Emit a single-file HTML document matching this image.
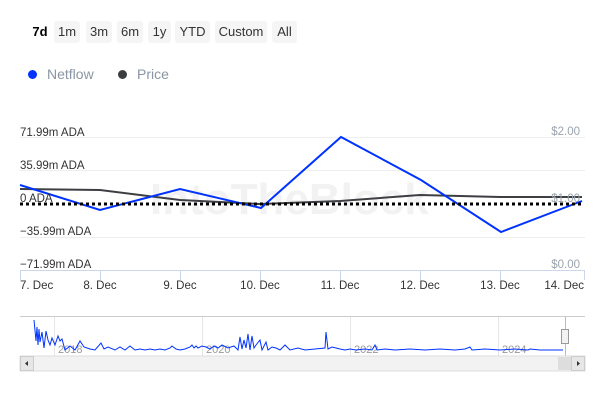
<!DOCTYPE html>
<html><head><style>
body{margin:0;width:600px;height:400px;background:#fff;font-family:"Liberation Sans",sans-serif;position:relative;overflow:hidden}
.b{position:absolute;top:21px;height:22px;line-height:22px;font-size:13px;color:#333;background:#f5f5f5;border-radius:3px;text-align:center}
.t{position:absolute;font-size:11.5px;color:#333}
</style></head><body>
<div class="b" style="left:28px;width:24px;background:none;font-weight:bold;color:#000">7d</div>
<div class="b" style="left:54px;width:26px">1m</div>
<div class="b" style="left:86px;width:26px">3m</div>
<div class="b" style="left:117px;width:26px">6m</div>
<div class="b" style="left:148px;width:23px">1y</div>
<div class="b" style="left:175px;width:35px">YTD</div>
<div class="b" style="left:215px;width:52px">Custom</div>
<div class="b" style="left:272px;width:25px">All</div>
<div style="position:absolute;left:28px;top:70px;width:9px;height:9px;border-radius:50%;background:#0033ff"></div>
<div style="position:absolute;left:47px;top:66px;font-size:14px;color:#8a96a3">Netflow</div>
<div style="position:absolute;left:118px;top:70px;width:9px;height:9px;border-radius:50%;background:#3a3d40"></div>
<div style="position:absolute;left:137px;top:66px;font-size:14px;color:#8a96a3">Price</div>
<svg width="600" height="400" style="position:absolute;left:0;top:0">
<g stroke="#eee" stroke-width="1"><line x1="20" x2="585" y1="137.5" y2="137.5"/><line x1="20" x2="585" y1="170.5" y2="170.5"/><line x1="20" x2="585" y1="237.5" y2="237.5"/></g>
<text x="150" y="214" font-size="44" font-weight="bold" fill="#f2f2f2" font-family="Liberation Sans">IntoTheBlock</text>
<line x1="20" x2="585" y1="270.5" y2="270.5" stroke="#ccd6eb"/>
<g stroke="#ccd6eb"><line x1="20.5" x2="20.5" y1="270" y2="280"/><line x1="100.5" x2="100.5" y1="270" y2="280"/><line x1="180.5" x2="180.5" y1="270" y2="280"/><line x1="260.5" x2="260.5" y1="270" y2="280"/><line x1="340.5" x2="340.5" y1="270" y2="280"/><line x1="420.5" x2="420.5" y1="270" y2="280"/><line x1="500.5" x2="500.5" y1="270" y2="280"/><line x1="584.5" x2="584.5" y1="270" y2="280"/></g>
<polyline fill="none" stroke="#3d3f42" stroke-width="2" points="20,189 100,190 180,200 260,204 340,201 420,195 500,197 582,197"/>
<polyline fill="none" stroke="#0033ff" stroke-width="2" points="20,185 100,210 180,189 261,208 341,137 421,180 501,232 582,201"/>
<line x1="20" x2="584" y1="204" y2="204" stroke="#000" stroke-width="3" stroke-dasharray="3,3"/>
<g font-size="11.5" fill="#333" font-family="Liberation Sans">
<text x="20" y="136">71.99m ADA</text><text x="20" y="169">35.99m ADA</text><text x="20" y="202">0 ADA</text><text x="20" y="235">−35.99m ADA</text><text x="20" y="268">−71.99m ADA</text>
<text x="20" y="289">7. Dec</text><text x="100" y="289" text-anchor="middle">8. Dec</text><text x="180" y="289" text-anchor="middle">9. Dec</text><text x="260" y="289" text-anchor="middle">10. Dec</text><text x="340" y="289" text-anchor="middle">11. Dec</text><text x="420" y="289" text-anchor="middle">12. Dec</text><text x="500" y="289" text-anchor="middle">13. Dec</text><text x="584" y="289" text-anchor="end">14. Dec</text>
</g>
<g font-size="11.5" fill="#9aa3ad" font-family="Liberation Sans" text-anchor="end"><text x="580" y="135">$2.00</text><text x="580" y="202">$1.00</text><text x="580" y="268">$0.00</text></g>
<line x1="20" x2="585" y1="316.5" y2="316.5" stroke="#ccc"/>
<g stroke="#e6e6e6"><line x1="54.5" x2="54.5" y1="317" y2="356"/><line x1="202.5" x2="202.5" y1="317" y2="356"/><line x1="350.5" x2="350.5" y1="317" y2="356"/><line x1="498.5" x2="498.5" y1="317" y2="356"/></g>
<g font-size="11" fill="#999" font-family="Liberation Sans"><text x="58" y="353">2018</text><text x="206" y="353">2020</text><text x="354" y="353">2022</text><text x="502" y="353">2024</text></g>
<polyline fill="none" stroke="#0033ff" stroke-width="1" points="34,320 36,341 37,327 38,345 39,329 40,342 42,332 44,348 46,331 48,340 50,345 52,338 55,345 58,336 60,341 62,339 65,350 70,346 75,350 80,341 84,347 90,349 95,350 101,343 104,349 108,347 115,350 120,347 125,350 130,346 135,350 140,349 145,350 150,349 155,350 160,349 165,350 170,348 172,346 176,349 180,350 185,349 190,347 192,345 194,348 196,346 198,348 202,346 206,347 210,349 214,346 218,348 222,345 228,348 234,346 238,350 240,337 242,349 244,340 246,348 248,334 250,350 252,336 254,348 256,345 260,340 262,350 266,342 268,350 272,347 276,348 280,350 285,345 290,350 298,348 305,350 315,349 325,348 326,332 328,349 332,347 336,348 340,349 345,350 350,349 356,350 365,349 372,350 375,345 377,350 385,349 395,350 410,349 425,350 440,349 455,350 465,349 470,347 472,350 485,349 500,350 515,349 528,350 530,349 540,350 560,350 563,350"/>
<line x1="565.5" x2="565.5" y1="317" y2="356" stroke="#bbb"/>
<rect x="561.5" y="329.5" width="7" height="14" fill="#f2f2f2" stroke="#999"/>
<rect x="20" y="356" width="565" height="15" fill="#f2f2f2" stroke="#ddd"/>
<rect x="20.5" y="356.5" width="13" height="14" fill="#e6e6e6" stroke="#ccc"/>
<rect x="571.5" y="356.5" width="13" height="14" fill="#e6e6e6" stroke="#ccc"/>
<rect x="558" y="357" width="13" height="13" fill="#ddd"/>
<path d="M25 363.5 L28 361 L28 366 Z" fill="#333"/><path d="M580 363.5 L577 361 L577 366 Z" fill="#333"/>
</svg>
</body></html>
